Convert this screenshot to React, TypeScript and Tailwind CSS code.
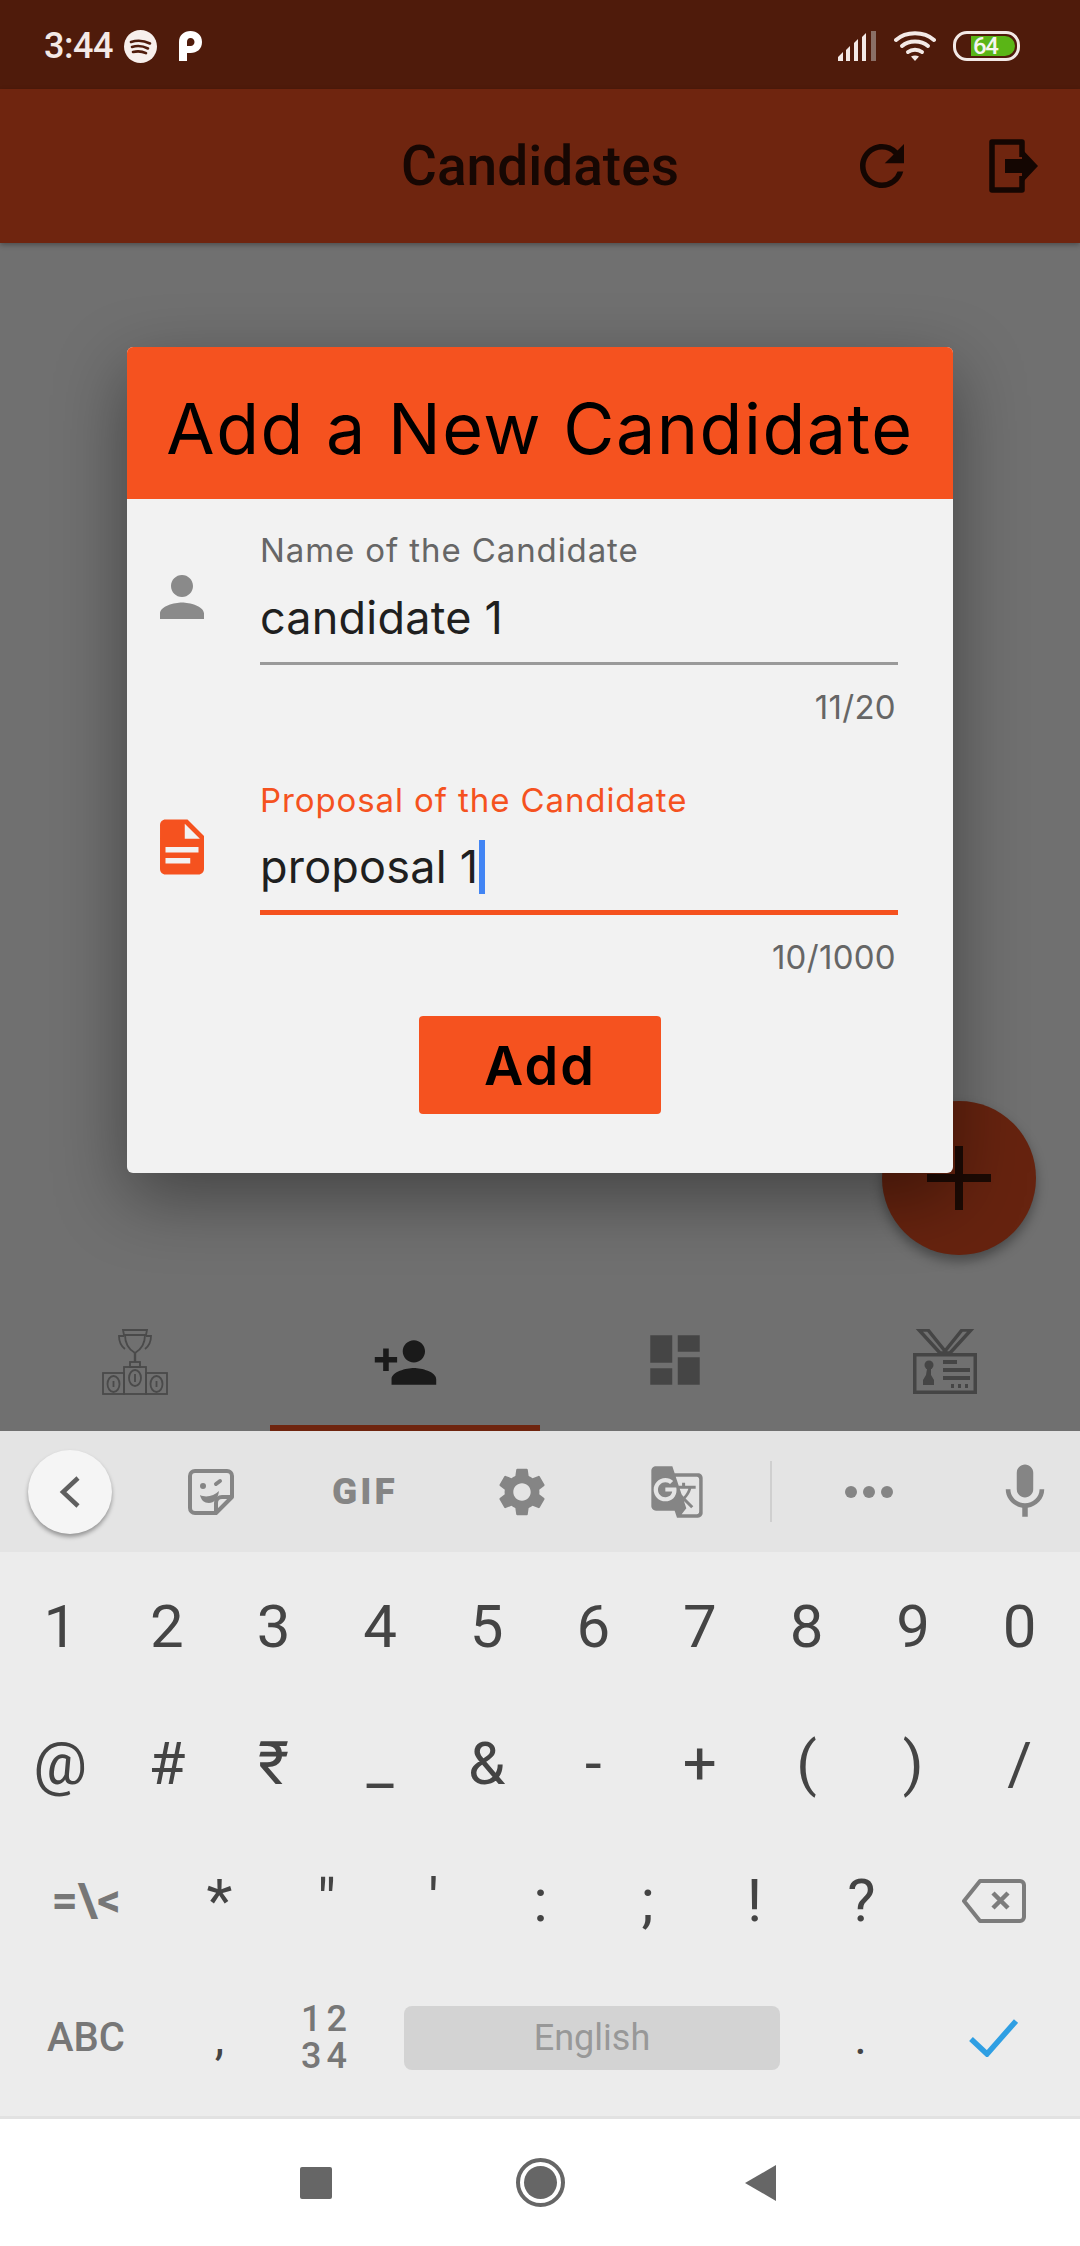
import React from "react";
import { MdDashboard, MdGTranslate, MdMic, MdPersonAdd, MdRefresh, MdSettings } from "react-icons/md";

const roboto = "font-['Roboto',sans-serif]";
const dialogFont = "font-['Inter',sans-serif]";

function Spotify() {
  return (
    <svg width="33" height="33" viewBox="0 0 33 33">
      <circle cx="16.5" cy="16.5" r="16.5" fill="#f7efec" />
      <path d="M7 12c6-2 13-1.500 19 1.500M8 17c5-1.500 11-1 16 1.500M9 22c4-1 9-.8 13 1.200" fill="none" stroke="#4f1b0b" strokeWidth="2.600" strokeLinecap="round" />
    </svg>
  );
}

function ParkingP() {
  return (
    <svg width="23" height="30" viewBox="0 0 23 30">
      <path d="M0 30V11C0 4 5 0 11.500 0S23 4 23 11s-5 11-11.500 11H8v8zM8 15h3.500c2.500 0 4-1.800 4-4s-1.500-4-4-4S8 9 8 11z" fill="#fff" fillRule="evenodd" />
    </svg>
  );
}

function Signal() {
  return (
    <svg width="39" height="30" viewBox="0 0 39 30">
      <path d="M0 30V26L5 21V30zM8 30V19L12 15V30zM16 30V12L20 8V30zM24 30V6L28 2V30z" fill="#f3e9e6" />
      <path d="M33 30V0L38 0V30z" fill="#8a6f66" />
    </svg>
  );
}

function Wifi() {
  return (
    <svg width="42" height="30" viewBox="0 0 42 30" fill="none" stroke="#f3e9e6" strokeWidth="4" strokeLinecap="round">
      <path d="M2 9C12 0 30 0 40 9" />
      <path d="M8 15C15 9 27 9 34 15" />
      <path d="M14 21C18 18 24 18 28 21" />
      <path d="M21 30L17 25.500C19.500 24 22.500 24 25 25.500z" fill="#f3e9e6" stroke="none" />
    </svg>
  );
}

function Battery() {
  return (
    <div className="relative flex h-[30px] w-[67px] items-center rounded-[14px] border-[3px] border-[#f3e9e6] pl-[15px] pr-[2px]">
      <div className="h-[20px] flex-1 rounded-r-[10px] bg-[#5ab516]" />
      <span className={`${roboto} absolute left-[17px] top-[0px] text-[24px] leading-[24px] font-medium tracking-[-1.500px] text-[#f5f5f0]`}>64</span>
    </div>
  );
}

function LogoutIcon() {
  return (
    <svg width="49" height="56" viewBox="0 0 49 56">
      <path d="M33 19V4H3v48h30V38" fill="none" stroke="#140602" strokeWidth="5.500" strokeLinejoin="round" />
      <path d="M16 21H33V11L49 28 33 45V35H16z" fill="#140602" />
    </svg>
  );
}

function PersonIcon() {
  return (
    <svg width="66" height="66" viewBox="0 0 24 24" fill="#8a8a8a">
      <path d="M12 12c2.210 0 4-1.790 4-4s-1.790-4-4-4-4 1.790-4 4 1.790 4 4 4zm0 2c-2.670 0-8 1.340-8 4v2h16v-2c0-2.660-5.330-4-8-4z" />
    </svg>
  );
}

function DocIcon() {
  return (
    <svg width="66" height="66" viewBox="0 0 24 24" fill="#f5521f">
      <path
        fillRule="evenodd"
        d="M14 2H6c-1.100 0-1.990.9-1.990 2L4 20c0 1.100.89 2 1.990 2H18c1.100 0 2-.9 2-2V8l-6-6zM15 18H6v-2h9v2zM18 14H6v-2h12v2zM13 9V3.500L18.500 9H13z"
      />
    </svg>
  );
}

function PodiumIcon() {
  return (
    <svg width="66" height="66" viewBox="0 0 66 66" fill="none" stroke="#4a4a4a" strokeWidth="1.800">
      <path d="M21 1h24l-1 5H22z" />
      <path d="M23 6c0 8 3 14 10 18 7-4 10-10 10-18" />
      <path d="M22 7h-5c0 6 2 10 6 13M44 7h5c0 6-2 10-6 13" />
      <path d="M33 24v9" strokeWidth="2.400" />
      <rect x="28" y="33" width="10" height="5" />
      <rect x="22" y="38" width="22" height="27" />
      <rect x="1" y="44" width="21" height="21" />
      <rect x="44" y="44" width="21" height="21" />
      <ellipse cx="33" cy="49" rx="6" ry="8" />
      <ellipse cx="11.500" cy="55" rx="6" ry="8" />
      <ellipse cx="54.500" cy="55" rx="6" ry="8" />
      <path d="M33 45v8M11.500 52v6M54.500 52v6" />
    </svg>
  );
}

function BadgeIcon() {
  return (
    <svg width="66" height="66" viewBox="0 0 66 66" fill="#454545">
      <path d="M7 1h9l17 21L50 1h9L38 24h-10z" fill="none" stroke="#454545" strokeWidth="3.500" />
      <path d="M1 24h64v41H1zM4.500 27.500v34h57v-34z" fillRule="evenodd" />
      <circle cx="17" cy="36" r="4.500" />
      <path d="M15 40h4v6l3 5v5H11v-5l3-5z" />
      <rect x="31" y="31" width="14" height="4" />
      <rect x="31" y="39" width="27" height="4" />
      <rect x="31" y="47" width="27" height="4" />
      <path d="M39 55h3v4h-3zM46 55h3v4h-3zM53 55h3v4h-3z" />
    </svg>
  );
}

function StickerIcon() {
  return (
    <svg width="46" height="46" viewBox="0 0 46 46" fill="none" stroke="#858585" strokeWidth="4">
      <path d="M7 2h32a5 5 0 0 1 5 5v21L28 44H7a5 5 0 0 1-5-5V7a5 5 0 0 1 5-5z" strokeLinejoin="round" />
      <path d="M44 28H34a6 6 0 0 0-6 6v10" />
      <circle cx="15" cy="17" r="3" fill="#858585" stroke="none" />
      <path d="M28 15l4-3" strokeLinecap="round" />
      <path d="M12 26c6 3 14 1 19-4-1 8-5 12-10 12-5 0-8-3-9-8z" fill="#858585" stroke="none" />
    </svg>
  );
}

function BackspaceIcon() {
  return (
    <svg width="64" height="44" viewBox="0 0 64 44" fill="none" stroke="#7c7c7c" strokeWidth="4">
      <path d="M18 2h40a4 4 0 0 1 4 4v32a4 4 0 0 1-4 4H18L2 22z" strokeLinejoin="round" />
      <path d="M31 14l15 15M46 14L31 29" strokeWidth="4.500" />
    </svg>
  );
}

function CheckIcon() {
  return (
    <svg width="49" height="38" viewBox="0 0 49 38" fill="none" stroke="#2f9fe3" strokeWidth="5.500">
      <path d="M2 20l16 15L47 2" />
    </svg>
  );
}

function Field({
  label,
  value,
  counter,
  focused,
  icon,
}: {
  label: string;
  value: string;
  counter: string;
  focused?: boolean;
  icon: React.ReactNode;
}) {
  return (
    <div className="flex">
      <div className="w-[133px] shrink-0 pl-[22px] pt-[32px]">{icon}</div>
      <div className="w-[638px]">
        <div className={`text-[33px] leading-[36px] tracking-[0.9px] ${focused ? "text-[#f5521f]" : "text-[#666666]"}`}>{label}</div>
        <div
          className={`mt-[10px] flex items-center pb-[4px] text-[45px] tracking-[0.2px] text-[#1f1f1f] ${
            focused ? "h-[87px] border-b-[5px] border-[#f5521f]" : "h-[87px] border-b-[3px] border-[#9a9a9a]"
          }`}
        >
          {value}
          {focused && <span className="ml-[1px] h-[54px] w-[6px] bg-[#4285f4]" />}
        </div>
        <div className="mt-[24px] pr-[2px] text-right text-[33px] leading-[36px] tracking-[0.3px] text-[#666666]">{counter}</div>
      </div>
    </div>
  );
}

const digits = ["1", "2", "3", "4", "5", "6", "7", "8", "9", "0"];
const symbols = ["@", "#", "₹", "_", "&", "-", "+", "(", ")", "/"];
const punctuation = ["*", '"', "'", ":", ";", "!", "?"];

export default function App() {
  return (
    <div className={`${roboto} relative flex h-[2246px] w-[1080px] flex-col overflow-hidden bg-[#707070]`}>
      <div className="flex h-[89px] items-center justify-between bg-[#4f1b0b] pl-[44px] pr-[60px] pt-[3px]">
        <div className="flex items-center">
          <span className="mr-[11px] text-[36px] font-medium tracking-[-0.5px] text-[#f3e9e6]">3:44</span>
          <Spotify />
          <span className="ml-[22px]">
            <ParkingP />
          </span>
        </div>
        <div className="flex items-center gap-[17px]">
          <Signal />
          <Wifi />
          <Battery />
        </div>
      </div>

      <div className="relative flex h-[154px] items-center justify-center bg-[#6f250f] shadow-[0_2px_5px_rgba(0,0,0,0.3)]">
        <span className="text-[55px] font-medium text-[#160703]">Candidates</span>
        <div className="absolute inset-y-0 right-[42px] flex items-center gap-[74px] text-[#140602]">
          <MdRefresh size={66} />
          <LogoutIcon />
        </div>
      </div>

      <div className="flex flex-1 flex-col justify-end">
        <div className="grid grid-cols-4">
          <div className="flex h-[116px] items-start justify-center pt-[14px]">
            <PodiumIcon />
          </div>
          <div className="flex h-[116px] items-start justify-center border-b-[6px] border-[#6f250f] pt-[14px] text-[#1a1a1a]">
            <MdPersonAdd size={67} />
          </div>
          <div className="flex h-[116px] items-start justify-center pt-[12px] text-[#454545]">
            <MdDashboard size={66} />
          </div>
          <div className="flex h-[116px] items-start justify-center pt-[14px]">
            <BadgeIcon />
          </div>
        </div>
      </div>

      <div className="flex h-[121px] items-center bg-[#e4e4e4] text-[#858585]">
        <div className="ml-[28px] flex h-[84px] w-[84px] items-center justify-center rounded-full bg-[#f5f5f5] shadow-[0_3px_4px_rgba(0,0,0,0.35)]">
          <svg width="24" height="34" viewBox="0 0 24 34" fill="none" stroke="#5f5f5f" strokeWidth="4.500">
            <path d="M20 3L5 17l15 14" />
          </svg>
        </div>
        <div className="ml-[76px]">
          <StickerIcon />
        </div>
        <span className="ml-[98px] w-[68px] text-[37px] font-black tracking-[3px]">GIF</span>
        <div className="ml-[93px]">
          <MdSettings size={58} />
        </div>
        <div className="ml-[98px]">
          <MdGTranslate size={56} />
        </div>
        <div className="ml-[65px] h-[61px] w-[2px] bg-[#cfcfcf]" />
        <div className="ml-[73px] flex gap-[6px]">
          <span className="h-[12px] w-[12px] rounded-full bg-[#858585]" />
          <span className="h-[12px] w-[12px] rounded-full bg-[#858585]" />
          <span className="h-[12px] w-[12px] rounded-full bg-[#858585]" />
        </div>
        <div className="ml-[99px]">
          <MdMic size={66} />
        </div>
      </div>

      <div className="flex h-[564px] flex-col bg-[#ececec] pt-[6px] text-[#444444]">
        <div className="grid h-[137px] grid-cols-10 items-center px-[7px] text-center text-[60px]">
          {digits.map((d) => (
            <span key={d}>{d}</span>
          ))}
        </div>
        <div className="grid h-[137px] grid-cols-10 items-center px-[7px] text-center text-[60px]">
          {symbols.map((s) => (
            <span key={s}>{s}</span>
          ))}
        </div>
        <div className="flex h-[137px] items-center text-center text-[60px]">
          <span className="w-[166px] pl-[6px] text-[46px] font-bold text-[#777777]">{"=\\<"}</span>
          {punctuation.map((p) => (
            <span key={p} className="w-[107px]">
              {p}
            </span>
          ))}
          <span className="flex w-[158px] justify-center">
            <BackspaceIcon />
          </span>
        </div>
        <div className="flex h-[137px] items-center text-center">
          <span className="w-[166px] pl-[6px] text-[40px] font-medium text-[#777777]">ABC</span>
          <span className="w-[107px] text-[48px]">,</span>
          <span className="w-[107px] text-[36px] leading-[37px] font-medium tracking-[5px] text-[#777777]">
            12
            <br />
            34
          </span>
          <span className="ml-[24px] flex h-[64px] w-[376px] items-center justify-center rounded-[8px] bg-[#d3d3d3] text-[36px] text-[#989898]">
            English
          </span>
          <span className="ml-[27px] w-[107px] text-[48px]">.</span>
          <span className="flex w-[158px] justify-center">
            <CheckIcon />
          </span>
        </div>
      </div>

      <div className="flex h-[130px] items-center border-t-[3px] border-[#e2e2e2] bg-white">
        <div className="ml-[300px] h-[32px] w-[32px] rounded-[2px] bg-[#666666]" />
        <div className="ml-[184px] flex h-[49px] w-[49px] items-center justify-center rounded-full border-[4px] border-[#666666]">
          <div className="h-[33px] w-[33px] rounded-full bg-[#666666]" />
        </div>
        <svg className="ml-[180px]" width="31" height="36" viewBox="0 0 31 36">
          <path d="M31 0V36L0 18z" fill="#666666" />
        </svg>
      </div>

      <div className="absolute left-[882px] top-[1101px] flex h-[154px] w-[154px] items-center justify-center rounded-full bg-[#66230f] shadow-[0_6px_12px_rgba(0,0,0,0.35)]">
        <svg width="64" height="64" viewBox="0 0 64 64">
          <path d="M28 0h8v28h28v8H36v28h-8V36H0v-8h28z" fill="#1c0a04" />
        </svg>
      </div>

      <div
        className={`${dialogFont} absolute left-[127px] top-[347px] h-[826px] w-[826px] overflow-hidden rounded-[6px] bg-[#f2f2f2] shadow-[0_24px_70px_rgba(0,0,0,0.4)]`}
      >
        <div className="flex h-[152px] items-center justify-center bg-[#f5521f] pt-[10px] text-[70px] tracking-[1.500px] text-black">
          Add a New Candidate
        </div>
        <div className="pt-[33px]">
          <Field label="Name of the Candidate" value="candidate 1" counter="11/20" icon={<PersonIcon />} />
          <div className="mt-[57px]">
            <Field label="Proposal of the Candidate" value="proposal 1" counter="10/1000" focused icon={<DocIcon />} />
          </div>
        </div>
        <div className="mt-[41px] flex justify-center">
          <button className="flex h-[98px] w-[242px] items-center justify-center rounded-[4px] bg-[#f5521f] text-[54px] font-semibold tracking-[2px] text-black">
            Add
          </button>
        </div>
      </div>
    </div>
  );
}
